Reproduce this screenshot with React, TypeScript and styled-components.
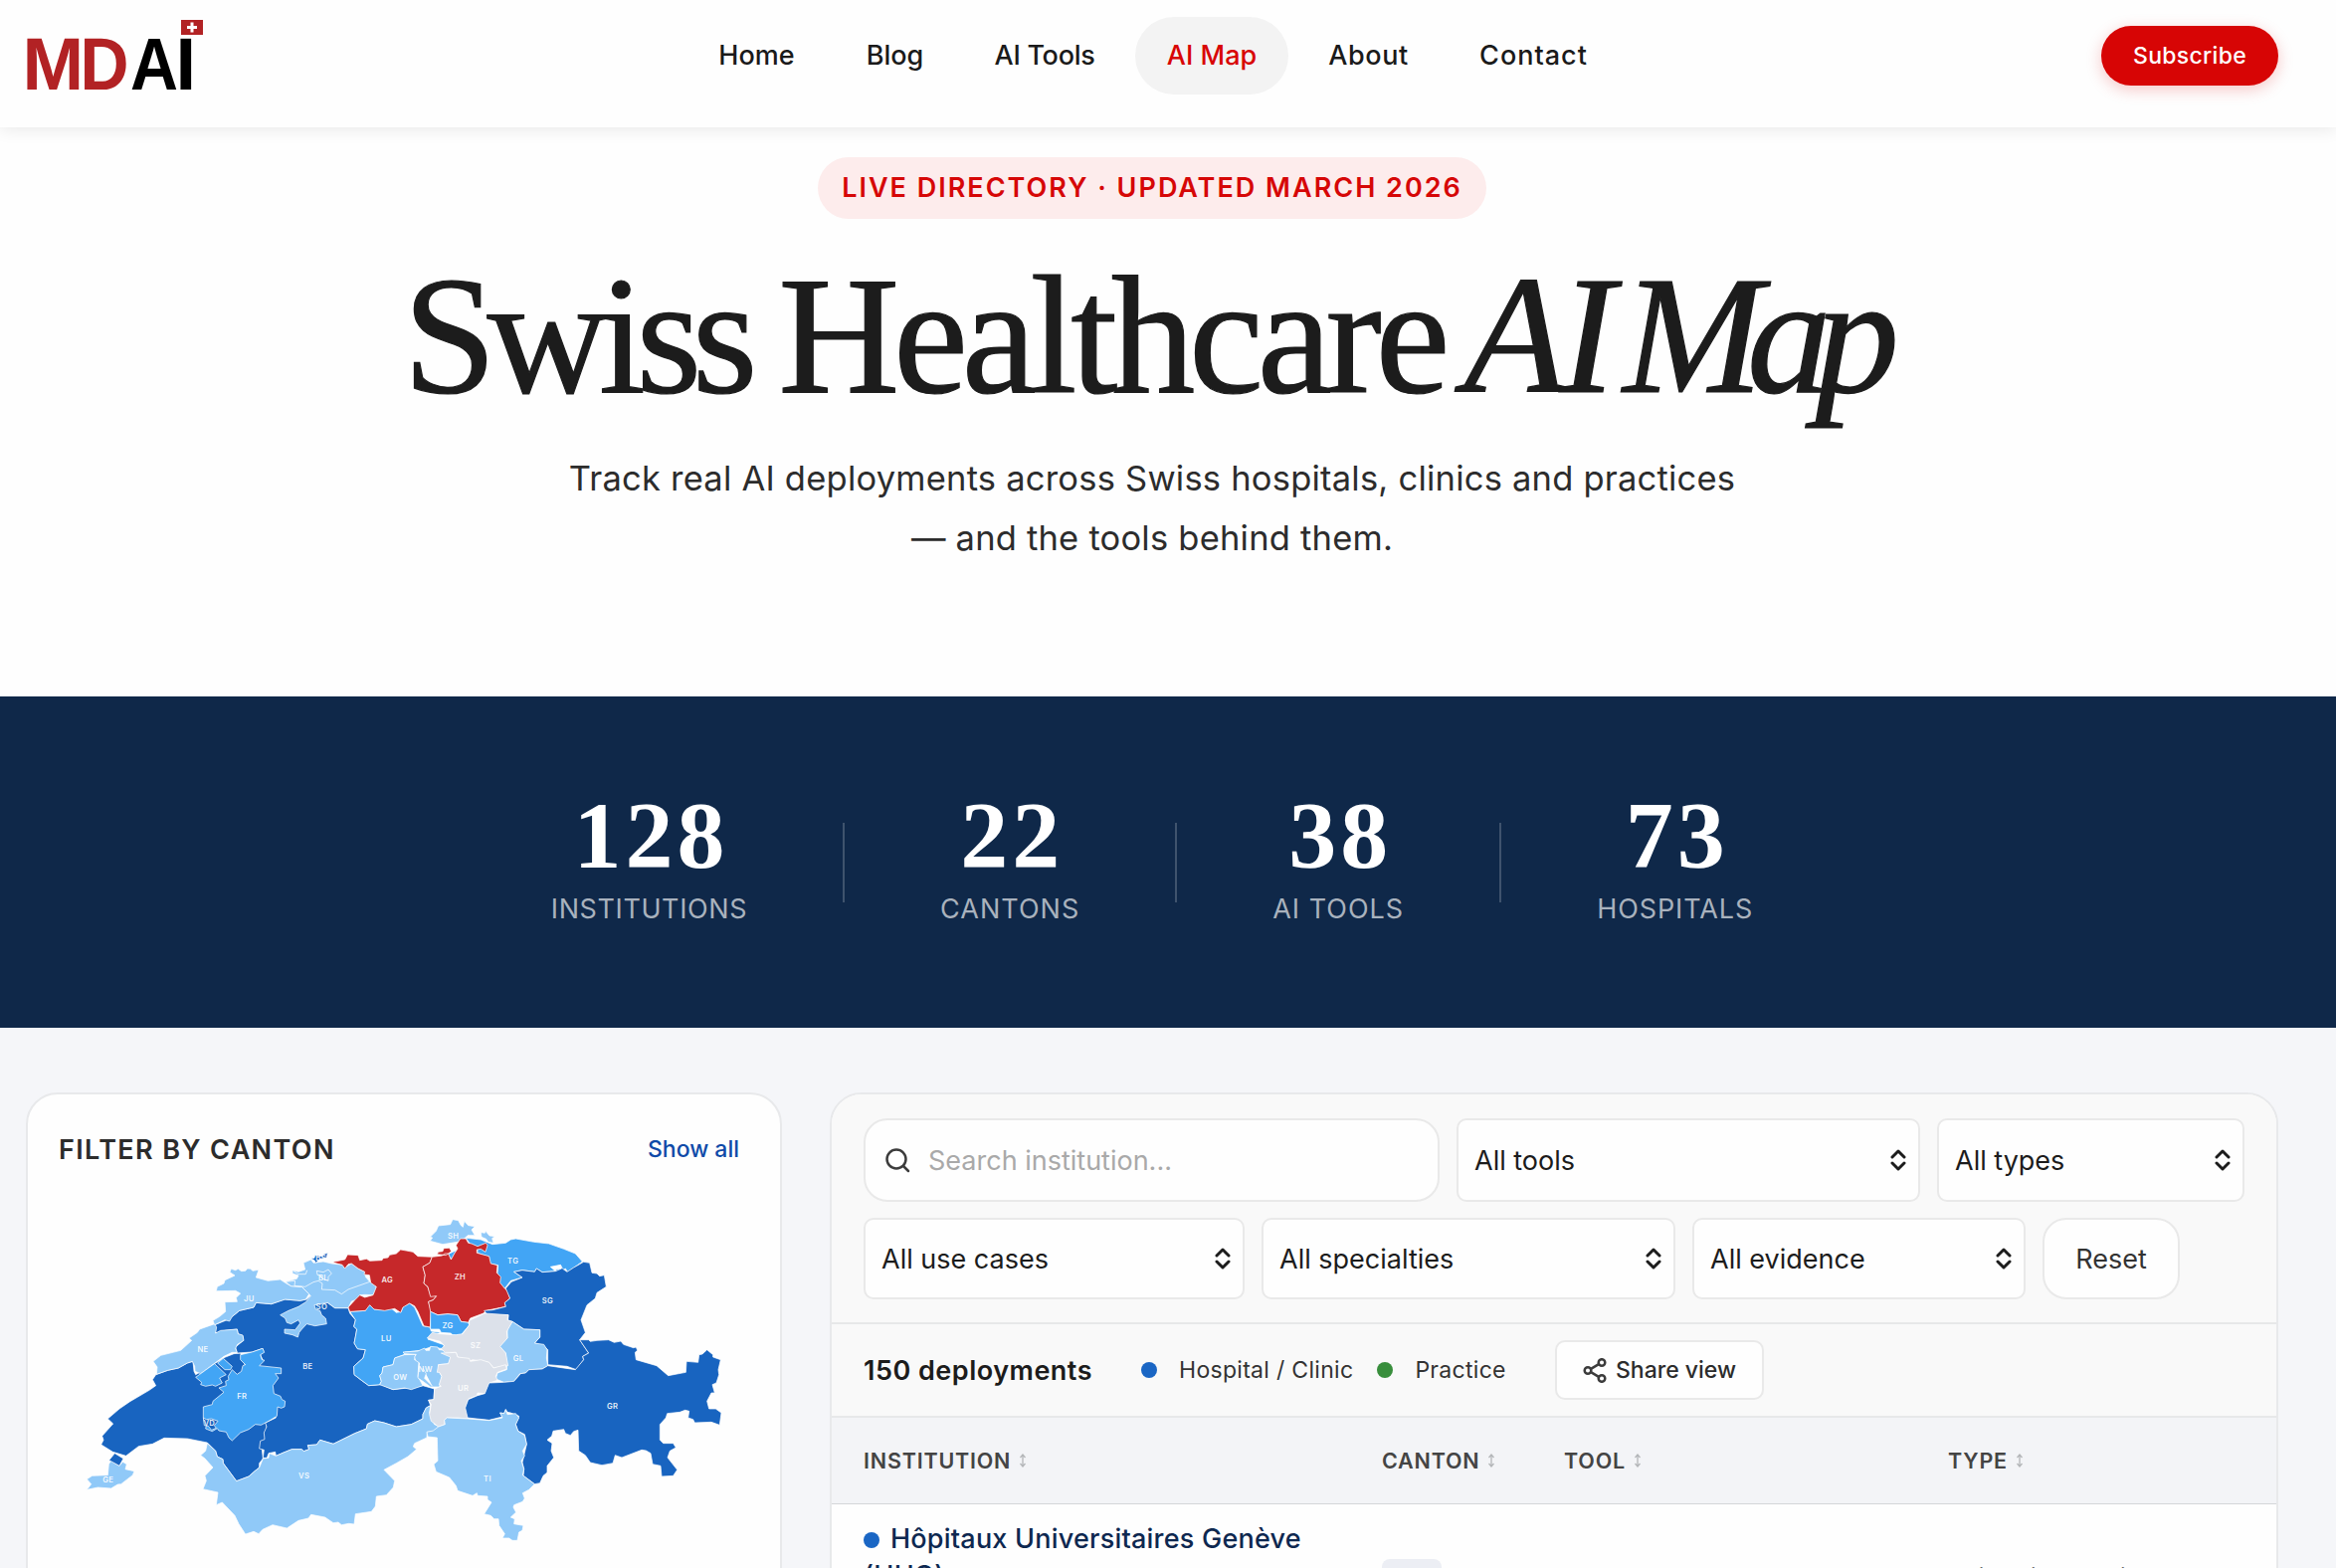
import React from 'react';
import styled, { createGlobalStyle } from 'styled-components';

interface Canton {
    id: string;
    fill: string;
    d: string;
    east?: boolean;
    label?: [number, number];
}

const NAVY = '#1864c0';
const MID = '#42a5f5';
const LIGHT = '#90c9f8';
const RED = '#c6282a';
const NONE = '#dce1ea';
const EAST_OFFSET = 990;

const NAV = [
    { label: 'Home', width: 141, tracking: 0 },
    { label: 'Blog', width: 119, tracking: 0 },
    { label: 'AI Tools', width: 164, tracking: -0.3 },
    { label: 'AI Map', width: 154, tracking: 0 },
    { label: 'About', width: 143, tracking: 0.6 },
    { label: 'Contact', width: 171, tracking: 1 },
];

const STATS = [
    { value: '128', label: 'INSTITUTIONS', tracking: 0.6 },
    { value: '22', label: 'CANTONS', tracking: 1 },
    { value: '38', label: 'AI TOOLS', tracking: 1 },
    { value: '73', label: 'HOSPITALS', tracking: 0.9 },
];

// Eastern cantons are stored relative to EAST_OFFSET
const CANTONS: Canton[] = [
    { id: 'VD', fill: NAVY, d: 'M372 475L355 480L328 495L296 502L260 515L250 530L260 548L240 562L182 596L150 618L115 648L131 663L98 700L102 712L95 726L130 748L170 760L208 731L250 724L285 706L355 708L415 720L440 745L445 762L462 770L463 782L503 836L540 822L558 806L572 795L572 782L583 768L580 740L594 700L594 660L560 600L530 490L515 450L495 452L470 462L380 515L375 505Z' },
    { id: 'BE', fill: NAVY, d: 'M437 365L470 352L490 340L512 322L555 312L562 298L608 302L648 288L695 292L715 288L730 274L760 290L778 298L800 314L840 314L845 330L862 350L857 370L866 378L862 400L858 420L868 437L892 440L885 465L857 490L858 515L880 532L902 548L940 545L975 560L1020 555L1065 548L1100 558L1098 590L1082 592L1088 608L1075 615L1065 635L1065 648L1030 665L985 672L948 660L920 654L898 664L895 678L860 692L795 724L755 712L745 726L718 728L722 740L706 746L700 740L670 740L645 750L622 760L620 748L600 752L595 766L583 766L586 742L572 738L575 715L588 710L586 690L594 672L590 660L622 645L600 580L570 488L582 470L575 455L585 445L582 436L550 447L505 450L500 432L524 412L522 398L508 392L505 378L470 382L445 390L437 385Z', label: [718, 491] },
    { id: 'NE', fill: LIGHT, d: 'M437 362L443 372L440 390L455 382L505 378L508 392L522 396L525 412L506 424L500 436L505 448L490 448L465 460L395 512L378 505L377 490L370 475L355 480L328 495L296 502L262 514L264 492L252 475L275 457L335 442L368 412L360 405L385 388L392 378Z', label: [402, 438] },
    { id: 'JU', fill: LIGHT, d: 'M487 196L500 200L508 196L518 203L530 202L536 195L545 196L552 202L570 199L562 222L598 232L635 228L650 238L668 248L700 250L722 272L712 288L695 292L650 288L608 302L562 298L555 312L512 322L490 340L482 354L468 350L437 365L432 352L452 340L470 325L468 296L505 295L502 283L515 270L500 262L442 263L445 250L465 240L468 230L498 216L483 206Z', label: [541, 286] },
    { id: 'VS', fill: LIGHT, d: 'M415 722L440 745L445 762L462 770L463 782L503 836L540 822L558 806L572 795L583 768L600 766L602 752L622 760L645 750L670 740L700 740L706 746L722 740L718 728L745 726L755 712L795 724L860 692L895 678L898 664L920 654L948 660L985 672L1030 665L1065 648L1065 635L1075 615L1088 608L1085 630L1100 665L1112 670L1106 684L1078 688L1077 705L1040 722L1036 732L1046 740L1020 762L985 782L948 802L980 835L976 855L955 878L925 882L922 912L910 928L862 935L858 966L842 964L820 968L810 960L795 962L770 945L728 937L720 948L690 955L655 978L612 968L582 982L570 995L555 988L530 996L510 965L498 940L460 900L442 908L447 870L402 860L412 835L408 820L432 795L408 768L395 758L410 745Z', label: [707, 821] },
    { id: 'GE', fill: LIGHT, d: 'M118 785L125 775L150 790L160 778L172 785L168 800L195 806L190 818L155 845L145 846L125 858L85 855L52 862L65 845L52 830L68 820L115 818Z', label: [116, 831] },
    { id: 'VD', fill: NAVY, d: 'M136 752L162 768L150 790L119 773Z' },
    { id: 'FR', fill: MID, d: 'M515 455L550 447L582 436L587 448L575 455L580 470L588 472L572 488L638 495L638 512L620 512L630 525L613 548L616 572L636 580L640 590L650 595L648 612L638 616L627 612L625 640L600 655L577 667L560 665L540 680L515 690L490 714L480 705L472 688L450 684L445 677L430 686L410 678L412 668L403 645L403 612L430 605L432 595L465 568L450 555L472 548L470 535L480 530L478 520L490 500L505 514L518 505L522 488L530 485L515 470Z', label: [520, 579] },
    { id: 'FR', fill: MID, d: 'M380 523L437 482L472 515L452 525L460 540L440 550L430 546L410 550L395 545L398 538Z' },
    { id: 'FR', fill: MID, d: 'M446 480L463 466L490 490L485 500L468 500Z' },
    { id: 'VD', fill: NAVY, d: 'M403 645L412 650L428 648L447 655L436 668L442 676L428 682L418 670L406 668Z', label: [421, 660] },
    { id: 'SO', fill: LIGHT, d: 'M672 200L690 205L710 198L705 178L728 168L735 178L765 174L790 180L825 184L828 193L850 180L870 195L892 205L892 220L905 235L922 240L925 255L915 275L890 274L875 275L868 287L850 294L840 314L800 314L778 298L738 305L742 318L755 322L760 335L772 345L775 362L740 368L715 362L700 378L692 388L688 402L672 395L648 390L648 378L680 380L695 360L690 350L668 362L655 358L650 345L635 335L660 322L690 310L712 296L727 278L722 272L700 250L668 248L650 235L685 226L690 216L672 210Z', label: [760, 310] },
    { id: 'BL', fill: 'none', d: 'M650 235L680 232L678 247L710 250L735 236L750 232L762 240L760 258L800 260L820 272L840 258L905 235M745 202L765 206L780 198L790 210L780 220L780 232L762 226L756 216L747 214ZM674 202L690 212L712 212L716 200', label: [765, 223] },
    { id: 'BS', fill: NAVY, d: 'M728 165L738 163L740 155L762 158L766 152L778 148L775 162L755 166L742 178L738 170Z', label: [758, 164] },
    { id: 'LU', fill: MID, d: 'M845 325L892 322L897 308L907 305L918 318L950 320L970 315L985 328L1000 325L1005 310L1025 300L1040 312L1065 368L1087 372L1090 384L1118 388L1080 408L1128 425L1128 437L1088 432L1060 442L1010 447L1008 455L980 465L975 485L945 492L942 510L935 518L940 535L935 545L902 548L880 532L858 515L857 490L885 465L892 440L868 437L858 420L862 400L866 378L857 370L862 350Z', label: [955, 407] },
    { id: 'AG', fill: RED, d: 'M795 175L830 168L838 153L870 155L875 170L895 166L905 172L942 170L945 164L960 162L965 154L985 150L998 138L1020 142L1035 145L1050 158L1093 160L1086 178L1065 190L1072 215L1068 240L1080 250L1088 275L1106 278L1096 290L1082 295L1090 325L1087 372L1068 368L1050 325L1040 308L1025 300L1005 312L998 328L980 316L950 322L918 318L905 305L892 322L845 325L840 312L860 290L875 275L890 282L915 275L925 250L908 238L904 215L888 213L890 205L870 195L850 180L840 182L830 195L822 184L798 178Z', label: [958, 228] },
    { id: 'OW', fill: LIGHT, d: 'M935 545L940 535L935 518L942 510L945 492L975 485L980 465L1010 455L1043 454L1040 470L1053 474L1050 520L1065 548L1030 560L1010 555L975 560Z', label: [997, 522] },
    { id: 'SH', east: true, fill: LIGHT, d: 'M97 100L115 82L122 66L158 62L165 47L182 50L190 65L196 70L200 52L212 65L232 68L222 78L232 95L210 95L200 105L180 115L160 118L135 122L97 112L104 102ZM250 86L262 88L264 82L276 96L292 98L284 104L288 118L272 115L266 106L252 100Z', label: [167, 97] },
    { id: 'TG', east: true, fill: MID, d: 'M205 103L250 108L285 122L325 118L340 108L355 105L410 115L455 120L500 136L535 150L556 174L512 206L505 195L494 203L480 205L475 198L494 195L490 184L460 190L475 203L435 206L418 195L412 205L375 200L350 205L375 222L340 232L322 255L305 240L300 210L302 185L275 180L275 160L240 148L240 135L215 118ZM150 152L176 140L162 168Z', label: [347, 171] },
    { id: 'ZH', east: true, fill: RED, d: 'M188 105L205 105L212 118L222 120L240 128L265 118L270 125L264 145L250 136L238 138L238 148L275 158L280 180L300 185L298 208L310 220L308 238L322 255L330 262L338 285L322 298L325 310L265 322L258 330L218 345L212 358L190 355L180 335L150 332L120 335L98 325L92 295L106 290L116 278L98 280L90 250L78 240L82 215L75 190L96 178L103 160L134 156L140 150L152 150L160 168L170 150L180 135L175 125ZM118 152L122 145L135 143L138 134L155 133L161 143L145 155Z', label: [187, 220] },
    { id: 'SG', east: true, fill: NAVY, d: 'M260 322L285 320L325 310L322 298L338 285L325 255L342 235L375 222L350 205L375 200L412 205L418 195L435 206L475 203L494 195L490 184L497 196L510 205L530 192L560 175L578 178L585 208L600 210L608 218L622 215L628 250L600 268L595 285L570 305L552 350L565 388L548 410L575 450L557 460L560 470L538 500L510 490L452 485L452 440L440 428L412 420L428 402L428 380L380 378L345 355L332 352L333 335L270 335Z', label: [451, 292] },
    { id: 'ZG', east: true, fill: MID, d: 'M98 325L120 335L150 332L180 335L190 355L212 358L215 366L190 395L165 397L160 390L130 388L125 378L98 378Z', label: [150, 366] },
    { id: 'GL', east: true, fill: LIGHT, d: 'M345 355L380 378L428 380L428 402L412 420L440 424L450 440L448 465L452 488L435 498L395 500L385 510L368 512L350 535L320 538L295 528L300 510L328 500L328 488L325 450L305 430L330 405L330 378Z', label: [363, 466] },
    { id: 'NW', east: true, fill: LIGHT, d: 'M15 447L60 444L80 435L84 442L95 442L98 430L120 432L124 440L148 442L165 450L152 482L122 485L125 508L132 520L125 552L98 552L75 535L60 525L65 480L53 472L50 462L55 454L20 452ZM75 495L85 512L80 526L104 550', label: [83, 499] },
    { id: 'SZ', east: true, fill: NONE, d: 'M88 405L103 388L125 392L175 395L195 392L215 365L215 352L262 330L333 335L330 350L345 355L328 385L330 405L308 430L325 450L332 488L288 495L275 478L225 470L215 475L190 465L180 462L175 448L142 448L130 437L140 428L128 415Z', label: [234, 426] },
    { id: 'UR', east: true, fill: NONE, d: 'M130 450L175 448L180 462L215 466L218 475L250 470L275 478L288 495L325 485L328 498L300 508L295 520L300 532L275 540L272 555L262 572L240 570L238 578L212 588L205 615L212 630L210 648L180 645L148 645L140 652L142 665L122 672L100 655L95 635L100 605L92 592L108 590L110 558L130 550L124 545L132 520L125 508L118 508L122 485L152 482L158 462Z', label: [197, 555] },
    { id: 'GR', east: true, fill: NAVY, d: 'M548 410L575 410L580 415L600 412L635 410L652 418L672 414L680 424L710 434L718 432L722 442L715 448L718 470L780 488L815 518L868 508L870 475L905 478L908 455L918 453L932 440L950 455L950 462L973 470L966 500L968 515L960 540L948 545L955 570L945 570L932 595L938 618L958 618L975 630L970 667L945 658L895 660L890 650L875 645L878 625L866 622L850 628L812 632L808 645L790 665L790 712L800 722L830 722L838 735L820 745L813 765L842 802L830 820L795 822L792 790L768 785L762 752L748 744L735 742L675 765L655 758L648 782L615 788L580 780L565 758L545 745L543 682L530 686L520 698L505 692L500 680L468 685L464 700L450 712L465 722L462 745L470 765L450 790L450 810L438 820L428 842L412 845L378 820L380 800L375 780L388 725L382 695L362 685L355 665L365 640L340 630L330 628L325 620L320 632L308 630L315 642L275 652L210 645L203 615L212 590L240 578L262 572L275 540L320 538L350 535L370 512L385 510L395 500L435 498L452 488L535 500L560 470L557 460L575 450Z', label: [647, 610] },
    { id: 'TI', east: true, fill: LIGHT, d: 'M122 672L142 665L140 652L148 645L210 648L275 653L315 645L308 630L320 632L325 620L330 635L355 632L365 645L355 665L362 685L382 698L388 725L376 745L382 760L372 775L380 800L376 818L412 845L395 862L376 872L382 888L376 898L350 908L348 915L356 930L340 945L352 950L350 965L378 970L375 985L365 990L360 1015L345 1015L335 1008L315 1008L322 995L305 970L303 950L290 950L280 940L260 935L282 900L270 892L270 882L240 880L238 872L225 880L180 865L175 850L155 825L115 808L108 785L120 775L118 705L90 702L87 688L106 684Z', label: [270, 828] },
];

const Logo = () => (
    <LogoSvg viewBox="0 0 180 72" aria-label="MDAI">
        <LogoText y="69.5" fill="#b22224">
            <tspan x="-4.5">M</tspan>
            <tspan x="53.5" textLength="49" lengthAdjust="spacingAndGlyphs">D</tspan>
        </LogoText>
        <LogoText y="69.5" fill="#000">
            <tspan x="104" textLength="48" lengthAdjust="spacingAndGlyphs">A</tspan>
            <tspan x="149.5">I</tspan>
        </LogoText>
        <rect x="155" y="0" width="22" height="15" fill="#b22224" />
        <path d="M166 2.500v10M161 7.500h10" stroke="#fff" strokeWidth="3" />
    </LogoSvg>
);

const Chevrons = () => (
    <ChevronSvg viewBox="0 0 16 22">
        <path d="M2 8l6-6 6 6M2 14l6 6 6-6" />
    </ChevronSvg>
);

const SearchIcon = () => (
    <IconSvg $size={26} viewBox="0 0 26 26">
        <circle cx="12" cy="12" r="9.500" />
        <path d="M19 19l5 5" />
    </IconSvg>
);

const ShareIcon = () => (
    <IconSvg $size={25} viewBox="0 0 25 25">
        <circle cx="19" cy="4.500" r="3.300" />
        <circle cx="5" cy="12.500" r="3.300" />
        <circle cx="19" cy="20.500" r="3.300" />
        <path d="M8 10.900l8-4.700M8 14.100l8 4.700" />
    </IconSvg>
);

const CantonMap = () => (
    <MapSvg viewBox="0 0 2010 1050">
        {CANTONS.map(({ id, fill, d, east }, i) => (
            <path
                key={id + i}
                d={d}
                fill={fill}
                transform={east ? `translate(${EAST_OFFSET} 0)` : undefined}
            />
        ))}
        {CANTONS.map(
            ({ id, east, label }, i) =>
                label && (
                    <text key={id + i} x={label[0] + (east ? EAST_OFFSET : 0)} y={label[1] + 8}>
                        {id}
                    </text>
                )
        )}
    </MapSvg>
);

interface FilterProps {
    label: string;
    width: number;
}

const Filter: React.FC<FilterProps> = ({ label, width }) => (
    <Select $width={width}>
        <span>{label}</span>
        <Chevrons />
    </Select>
);

const App: React.FC = () => (
    <Page>
        <GlobalStyle />
        <Header>
            <Logo />
            <Nav>
                {NAV.map(({ label, width, tracking }) => (
                    <NavItem
                        key={label}
                        $width={width}
                        $tracking={tracking}
                        $active={label === 'AI Map'}>
                        {label}
                    </NavItem>
                ))}
            </Nav>
            <Subscribe>Subscribe</Subscribe>
        </Header>
        <Hero>
            <Badge>LIVE DIRECTORY · UPDATED MARCH 2026</Badge>
            <Title>
                <Word $tracking={-9.5} $after={-4}>Swiss</Word>{' '}
                <Word $tracking={-6.3} $after={-14}>Healthcare</Word>{' '}
                <em>
                    <Word $tracking={-7} $after={-20}>AI</Word>{' '}
                    <Word $tracking={-16} $after={18}>Map</Word>
                </em>
            </Title>
            <Lead>
                Track real AI deployments across Swiss hospitals, clinics and practices
                <br />— and the tools behind them.
            </Lead>
        </Hero>
        <StatsBand>
            {STATS.map(({ value, label, tracking }, i) => (
                <React.Fragment key={label}>
                    {i > 0 && <StatDivider />}
                    <Stat>
                        <StatValue>{value}</StatValue>
                        <StatLabel $tracking={tracking}>{label}</StatLabel>
                    </Stat>
                </React.Fragment>
            ))}
        </StatsBand>
        <Main>
            <MapCard>
                <MapHead>
                    <MapTitle>FILTER BY CANTON</MapTitle>
                    <ShowAll>Show all</ShowAll>
                </MapHead>
                <CantonMap />
            </MapCard>
            <TableCard>
                <Filters>
                    <FilterRow $height={84}>
                        <Search>
                            <SearchIcon />
                            <span>Search institution...</span>
                        </Search>
                        <Filter label="All tools" width={466} />
                        <Filter label="All types" width={309} />
                    </FilterRow>
                    <FilterRow $height={82}>
                        <Filter label="All use cases" width={383} />
                        <Filter label="All specialties" width={416} />
                        <Filter label="All evidence" width={335} />
                        <Reset>Reset</Reset>
                    </FilterRow>
                </Filters>
                <Summary>
                    <Count>150 deployments</Count>
                    <Legend>
                        <Dot $color="#1a66c4" />
                        <span>Hospital / Clinic</span>
                        <Dot $color="#388e3c" />
                        <span>Practice</span>
                    </Legend>
                    <Share>
                        <ShareIcon />
                        <span>Share view</span>
                    </Share>
                </Summary>
                <HeadRow>
                    {['INSTITUTION', 'CANTON', 'TOOL', 'TYPE'].map((name) => (
                        <HeadCell key={name}>
                            <span>{name}</span>
                            <SortSvg viewBox="0 0 8 14">
                                <path d="M4 2v10M1.500 4L4 1l2.500 3M1.500 10L4 13l2.500-3" />
                            </SortSvg>
                        </HeadCell>
                    ))}
                </HeadRow>
                <BodyRow>
                    <Institution>
                        <Dot $color="#1a66c4" $inline />
                        Hôpitaux Universitaires Genève
                        <br />
                        (HUG)
                    </Institution>
                    <div>
                        <CantonTag>GE</CantonTag>
                    </div>
                    <div />
                    <TypeCell>University Hospital</TypeCell>
                </BodyRow>
            </TableCard>
        </Main>
    </Page>
);

const GlobalStyle = createGlobalStyle`
    * {
        box-sizing: border-box;
    }
    body {
        margin: 0;
        font-family: Inter, 'Liberation Sans', sans-serif;
        color: #1c1c1c;
        background: #f5f6f9;
    }
`;

const Page = styled.div`
    width: 2348px;
    height: 1576px;
    overflow: hidden;
    background: #f5f6f9;
`;

const Header = styled.header`
    position: relative;
    z-index: 1;
    display: grid;
    grid-template-columns: 1fr auto 1fr;
    align-items: center;
    height: 128px;
    padding: 0 58px 16px 27px;
    background: #fefefe;
    box-shadow: 0 2px 16px rgba(0, 0, 0, 0.09);
`;

const LogoSvg = styled.svg`
    width: 180px;
    height: 72px;
    overflow: visible;
`;

const LogoText = styled.text`
    font-family: 'Liberation Sans', Arial, sans-serif;
    font-size: 74px;
    font-weight: 700;
`;

const Nav = styled.nav`
    display: flex;
    gap: 9px;
`;

const NavItem = styled.a<{ $width: number; $tracking: number; $active: boolean }>`
    width: ${({ $width }) => $width}px;
    height: 78px;
    border-radius: 39px;
    font-size: 27px;
    font-weight: 450;
    line-height: 78px;
    letter-spacing: ${({ $tracking }) => $tracking}px;
    text-align: center;
    color: ${({ $active }) => ($active ? '#d80505' : '#1a1a1a')};
    background: ${({ $active }) => ($active ? '#f3f3f3' : 'transparent')};
`;

const Subscribe = styled.button`
    justify-self: end;
    width: 178px;
    height: 60px;
    padding: 0;
    border: 0;
    border-radius: 30px;
    font: 500 23px Inter, sans-serif;
    letter-spacing: 0.3px;
    color: #fff;
    background: #d70505;
    box-shadow: 0 4px 16px rgba(215, 5, 5, 0.22);
`;

const Hero = styled.section`
    display: flex;
    flex-direction: column;
    align-items: center;
    height: 572px;
    padding: 30px 32px 0 0;
    background: #fefefe;
`;

const Badge = styled.div`
    width: 672px;
    height: 62px;
    border-radius: 31px;
    font-size: 27px;
    font-weight: 600;
    line-height: 62px;
    letter-spacing: 2px;
    text-align: center;
    white-space: nowrap;
    color: #d60707;
    background: #fdecec;
`;

const Title = styled.h1`
    margin: 37px 0 0;
    font-family: 'Liberation Serif', 'Times New Roman', serif;
    font-size: 169px;
    font-weight: 400;
    line-height: 160px;
    letter-spacing: -8px;
    white-space: nowrap;
    color: #1c1c1c;
    -webkit-text-stroke: 1.2px #1c1c1c;
`;

const Word = styled.span<{ $tracking: number; $after: number }>`
    margin-right: ${({ $after }) => $after}px;
    letter-spacing: ${({ $tracking }) => $tracking}px;
`;

const Lead = styled.p`
    margin: 34px 0 0;
    font-size: 34.5px;
    line-height: 60px;
    letter-spacing: 0.22px;
    text-align: center;
    white-space: nowrap;
    color: #2c2c2c;
`;

const StatsBand = styled.section`
    display: flex;
    justify-content: center;
    gap: 96px;
    height: 333px;
    padding: 92px 32px 0 0;
    background: #0f2849;
`;

const Stat = styled.div`
    text-align: center;
`;

const StatValue = styled.div`
    margin-right: -4px;
    font-family: 'Liberation Serif', 'Times New Roman', serif;
    font-size: 96px;
    font-weight: 700;
    line-height: 96px;
    letter-spacing: 4px;
    color: #fff;
`;

const StatLabel = styled.div<{ $tracking: number }>`
    margin-top: 9px;
    font-size: 27px;
    line-height: 34px;
    letter-spacing: ${({ $tracking }) => $tracking}px;
    color: #a9b2bd;
`;

const StatDivider = styled.div`
    width: 2px;
    height: 80px;
    margin-top: 35px;
    background: #3f536d;
`;

const Main = styled.main`
    display: flex;
    gap: 48px;
    padding: 65px 0 0 26px;
`;

const Card = styled.section`
    height: 700px;
    border: 2px solid #e8e9eb;
    border-radius: 32px;
    background: #fefefe;
    overflow: hidden;
`;

const MapCard = styled(Card)`
    width: 760px;
`;

const MapHead = styled.div`
    display: flex;
    justify-content: space-between;
    align-items: center;
    height: 110px;
    padding: 0 41px 0 31px;
`;

const MapTitle = styled.h2`
    margin: 0;
    font-size: 27px;
    font-weight: 600;
    letter-spacing: 1.35px;
    color: #2c2c2c;
`;

const ShowAll = styled.a`
    font-size: 23px;
    font-weight: 500;
    color: #0f4aa8;
`;

const MapSvg = styled.svg`
    display: block;
    width: 670px;
    height: 350px;
    margin-left: 42px;

    path {
        stroke: rgba(255, 255, 255, 0.85);
        stroke-width: 2.5;
        stroke-linejoin: round;
    }
    text {
        font-size: 23px;
        font-weight: 600;
        letter-spacing: 1px;
        text-anchor: middle;
        fill: rgba(255, 255, 255, 0.9);
    }
`;

const TableCard = styled(Card)`
    width: 1456px;
`;

const Filters = styled.div`
    display: flex;
    flex-direction: column;
    gap: 16px;
    height: 231px;
    padding: 24px 32px 0;
    border-bottom: 2px solid #e7e8e9;
    background: #f9f9f9;
`;

const FilterRow = styled.div<{ $height: number }>`
    display: flex;
    gap: 17px;
    height: ${({ $height }) => $height}px;
    font-size: 27px;
`;

const Field = styled.div`
    display: flex;
    flex-shrink: 0;
    align-items: center;
    border: 2px solid #e9e9e9;
    background: #fefefe;
`;

const Search = styled(Field)`
    gap: 18px;
    width: 579px;
    padding-left: 19px;
    border-radius: 24px;
    color: #a9a9a9;
`;

const Select = styled(Field)<{ $width: number }>`
    justify-content: space-between;
    width: ${({ $width }) => $width}px;
    padding: 0 12px 0 16px;
    border-radius: 10px;
`;

const Reset = styled(Field)`
    justify-content: center;
    width: 138px;
    border-radius: 24px;
    color: #333;
`;

const ChevronSvg = styled.svg`
    width: 16px;
    height: 22px;
    fill: none;
    stroke: #1c1c1c;
    stroke-width: 3;
    stroke-linecap: round;
    stroke-linejoin: round;
`;

const IconSvg = styled.svg<{ $size: number }>`
    width: ${({ $size }) => $size}px;
    height: ${({ $size }) => $size}px;
    fill: none;
    stroke: #3c3c3c;
    stroke-width: 2.5;
    stroke-linecap: round;
`;

const Summary = styled.div`
    display: flex;
    align-items: center;
    height: 94px;
    padding-left: 32px;
    border-bottom: 2px solid #e7e8e9;
    background: #f9f9f9;
`;

const Count = styled.strong`
    width: 279px;
    font-size: 27px;
    font-weight: 600;
    letter-spacing: 0.5px;
`;

const Legend = styled.div`
    display: flex;
    align-items: center;
    width: 416px;
    font-size: 23px;
    letter-spacing: 0.3px;
    color: #333;

    span {
        margin: 0 24px 0 22px;
    }
`;

const Dot = styled.i<{ $color: string; $inline?: boolean }>`
    display: ${({ $inline }) => ($inline ? 'inline-block' : 'block')};
    flex-shrink: 0;
    width: 16px;
    height: 16px;
    margin-right: ${({ $inline }) => ($inline ? '11px' : '0')};
    border-radius: 50%;
    background: ${({ $color }) => $color};
`;

const Share = styled(Field)`
    gap: 8px;
    width: 210px;
    height: 60px;
    padding-left: 26px;
    border-radius: 10px;
    font-size: 23px;
    font-weight: 500;
    color: #2c2c2c;
    white-space: nowrap;
`;

const HeadRow = styled.div`
    display: grid;
    grid-template-columns: 521px 183px 386px 1fr;
    align-items: center;
    height: 87px;
    padding-left: 32px;
    border-bottom: 1px solid #d4d6d9;
    background: #f3f4f7;
`;

const HeadCell = styled.div`
    display: flex;
    align-items: center;
    gap: 8px;
    font-size: 21.5px;
    font-weight: 600;
    letter-spacing: 0.8px;
    color: #444;
`;

const SortSvg = styled.svg`
    width: 8px;
    height: 14px;
    fill: none;
    stroke: #b4b6b9;
    stroke-width: 1.3;
`;

const BodyRow = styled.div`
    display: grid;
    grid-template-columns: 521px 183px 386px 1fr;
    align-items: center;
    height: 146px;
    padding-left: 32px;
`;

const Institution = styled.div`
    align-self: start;
    padding-top: 16px;
    font-size: 27px;
    font-weight: 500;
    line-height: 37px;
    letter-spacing: 0.22px;
    white-space: nowrap;
    color: #0e2850;
`;

const CantonTag = styled.span`
    display: inline-block;
    width: 60px;
    height: 36px;
    border-radius: 8px;
    font-size: 22px;
    line-height: 36px;
    text-align: center;
    background: #eceef4;
`;

const TypeCell = styled.div`
    font-size: 23px;
    color: #333;
`;

export default App;
